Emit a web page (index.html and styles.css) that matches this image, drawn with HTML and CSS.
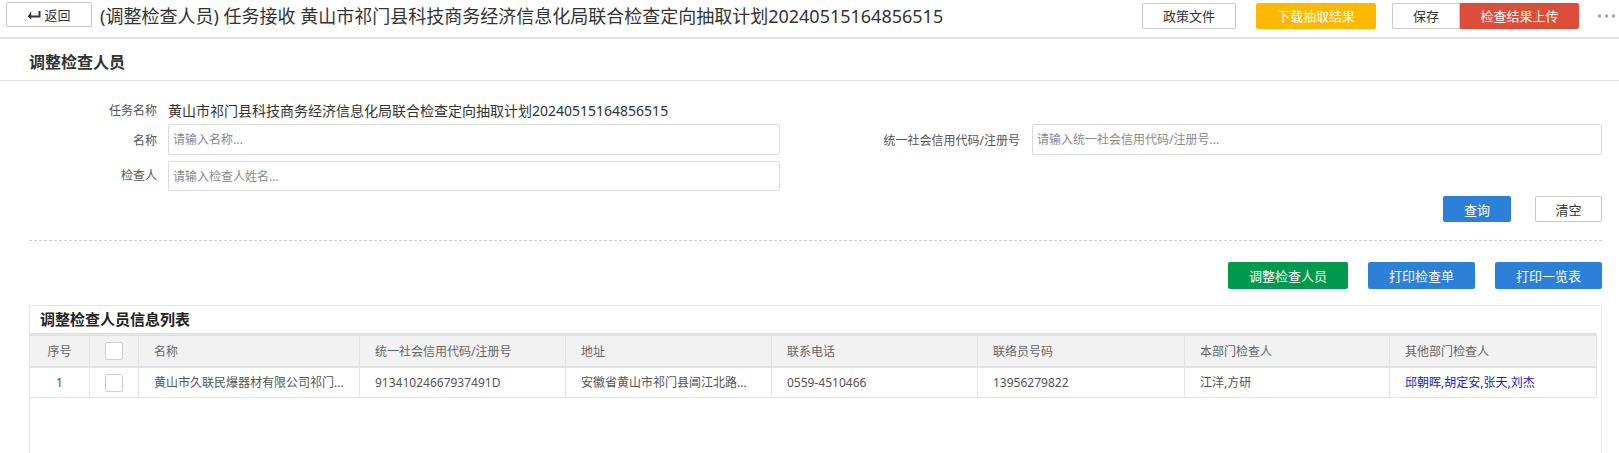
FILE: index.html
```html
<!DOCTYPE html>
<html lang="zh-CN">
<head>
<meta charset="utf-8">
<title>调整检查人员</title>
<link rel="stylesheet" href="styles.css">
</head>
<body>
<div class="topbar">
  <button class="back">
    <svg class="back-icon" width="14" height="10" viewBox="0 0 14 10"><path d="M4.2 1.2 L0.8 6.5 L4.2 9.5 Z" fill="#333"/><path d="M3 6.5 H12.5 V1" fill="none" stroke="#333" stroke-width="2"/></svg>
    <span>返回</span>
  </button>
  <div class="page-title">(调整检查人员) 任务接收 黄山市祁门县科技商务经济信息化局联合检查定向抽取计划20240515164856515</div>
  <div class="top-actions">
    <button class="tbtn tbtn-policy">政策文件</button>
    <button class="tbtn tbtn-yellow">下载抽取结果</button>
    <button class="tbtn tbtn-save">保存</button>
    <button class="tbtn tbtn-red">检查结果上传</button>
    <svg class="dots" width="19" height="6" viewBox="0 0 19 6"><circle cx="2.5" cy="3" r="1.8" fill="#a8a8a8"/><circle cx="9.5" cy="3" r="1.8" fill="#a8a8a8"/><circle cx="16.5" cy="3" r="1.8" fill="#a8a8a8"/></svg>
  </div>
</div>

<div class="section-head">调整检查人员</div>

<div class="form">
  <div class="form-label first">任务名称</div>
  <div class="form-value first">黄山市祁门县科技商务经济信息化局联合检查定向抽取计划20240515164856515</div>
  <div class="form-empty"></div>
  <div class="form-empty"></div>

  <div class="form-label">名称</div>
  <input class="form-input" type="text" placeholder="请输入名称...">
  <div class="form-label">统一社会信用代码/注册号</div>
  <input class="form-input" type="text" placeholder="请输入统一社会信用代码/注册号...">

  <div class="form-label third">检查人</div>
  <input class="form-input third" type="text" placeholder="请输入检查人姓名...">
  <div class="form-empty"></div>
  <div class="form-empty"></div>
</div>

<div class="query-row">
  <button class="qbtn qbtn-blue">查询</button>
  <button class="qbtn qbtn-white">清空</button>
</div>

<div class="dash"></div>

<div class="action-row">
  <button class="abtn abtn-green">调整检查人员</button>
  <button class="abtn abtn-blue">打印检查单</button>
  <button class="abtn abtn-blue">打印一览表</button>
</div>

<div class="panel">
  <div class="panel-title">调整检查人员信息列表</div>
  <div class="grid">
    <div class="cell head center">序号</div>
    <div class="cell head center"><span class="chk"></span></div>
    <div class="cell head">名称</div>
    <div class="cell head">统一社会信用代码/注册号</div>
    <div class="cell head">地址</div>
    <div class="cell head">联系电话</div>
    <div class="cell head">联络员号码</div>
    <div class="cell head">本部门检查人</div>
    <div class="cell head">其他部门检查人</div>

    <div class="cell center">1</div>
    <div class="cell center"><span class="chk"></span></div>
    <div class="cell">黄山市久联民爆器材有限公司祁门...</div>
    <div class="cell">91341024667937491D</div>
    <div class="cell">安徽省黄山市祁门县阊江北路...</div>
    <div class="cell">0559-4510466</div>
    <div class="cell">13956279822</div>
    <div class="cell">江洋,方研</div>
    <div class="cell link">邱朝晖,胡定安,张天,刘杰</div>
  </div>
</div>
</body>
</html>
```

FILE: styles.css
```css
* { box-sizing: border-box; }
html, body {
  margin: 0;
  padding: 0;
  background: #fff;
  font-family: "Noto Sans", "Noto Sans CJK SC", sans-serif;
  color: #333;
  overflow: hidden;
}
button {
  font-family: inherit;
  cursor: pointer;
  padding: 0;
  margin: 0;
}

/* top bar */
.topbar {
  display: flex;
  align-items: flex-start;
  height: 39px;
  padding-left: 6px;
  padding-right: 3px;
  border-bottom: 2px solid #e3e3e3;
}
.back {
  margin-top: 2px;
  width: 86px;
  height: 25px;
  background: #fff;
  border: 1px solid #c9c9c9;
  border-radius: 2px;
  display: flex;
  align-items: center;
  justify-content: center;
  gap: 3px;
  font-size: 13px;
  color: #333;
}
.back-icon { display: block; }
.page-title {
  margin-left: 8px;
  font-size: 18px;
  line-height: 32px;
  color: #333;
  white-space: nowrap;
}
.top-actions {
  margin-left: auto;
  margin-top: 3px;
  display: flex;
  align-items: center;
}
.tbtn {
  height: 26px;
  font-size: 13px;
  line-height: 24px;
  border-radius: 2px;
  border: 1px solid #c9c9c9;
  background: #fff;
  color: #333;
}
.tbtn-policy { width: 94px; margin-right: 20px; }
.tbtn-yellow {
  width: 120px;
  margin-right: 16px;
  background: #ffb800;
  border-color: #ffb800;
  color: #fff;
}
.tbtn-save {
  width: 68px;
  border-radius: 2px 0 0 2px;
}
.tbtn-red {
  width: 119px;
  background: #dd4e3a;
  border-color: #dd4e3a;
  color: #fff;
  border-radius: 0 2px 2px 0;
}
.dots { margin-left: 18px; display: block; }

/* section head */
.section-head {
  height: 42px;
  padding-left: 29px;
  padding-top: 12px;
  font-size: 16px;
  line-height: 22px;
  font-weight: bold;
  color: #333;
  border-bottom: 1px solid #e2e2e2;
}

/* form */
.form {
  display: grid;
  grid-template-columns: 139px 612px 252px 570px;
  grid-template-rows: 20px 31px 33px;
  row-gap: 3px;
  padding: 20px 17px 0 29px;
}
.form-label {
  font-size: 12px;
  color: #555;
  text-align: right;
  align-self: center;
  white-space: nowrap;
}
.form-label:nth-child(4n+1) { padding-right: 11px; }
.form-label:nth-child(4n+3) { padding-right: 12px; }
.form-label.first { line-height: 20px; }
.form-value {
  font-size: 14px;
  line-height: 20px;
  color: #333;
  white-space: nowrap;
}
.form-input {
  height: 31px;
  width: 100%;
  border: 1px solid #dcdcdc;
  border-radius: 2px;
  padding: 0 4px;
  font-family: inherit;
  font-size: 12px;
  color: #333;
  outline: none;
}
.form-input::placeholder { color: #8a8a8a; }
.form-input.third { height: 30px; align-self: end; }
.form-label.third { align-self: end; line-height: 30px; }

.query-row {
  display: flex;
  justify-content: flex-end;
  gap: 24px;
  padding: 5px 17px 0 0;
}
.qbtn {
  height: 26px;
  width: 68px;
  font-size: 13px;
  border-radius: 2px;
}
.qbtn-blue {
  background: #2d80d8;
  border: 1px solid #2d80d8;
  color: #fff;
}
.qbtn-white {
  width: 67px;
  background: #fff;
  border: 1px solid #c9c9c9;
  color: #333;
}

.dash {
  margin: 18px 17px 0 29px;
  border-top: 1px dashed #cfcfcf;
}

.action-row {
  display: flex;
  justify-content: flex-end;
  gap: 20px;
  padding: 21px 17px 0 0;
}
.abtn {
  height: 27px;
  font-size: 13px;
  color: #fff;
  border-radius: 2px;
  border: none;
}
.abtn-green { width: 120px; background: #009a4f; }
.abtn-blue { width: 107px; background: #2d80d8; }

/* panel */
.panel {
  margin: 16px 17px 0 29px;
  border: 1px solid #e6e6e6;
  border-bottom: none;
  height: 160px;
}
.panel-title {
  height: 27px;
  padding-left: 10px;
  font-size: 15px;
  line-height: 27px;
  font-weight: bold;
  color: #222;
}
.grid {
  display: grid;
  grid-template-columns: 60px 49px 221px 206px 206px 206px 207px 205px 207px;
  width: 1567px;
}
.cell {
  height: 30px;
  border-right: 1px solid #e4e4e4;
  border-bottom: 1px solid #e4e4e4;
  padding-left: 15px;
  font-size: 12px;
  line-height: 29px;
  color: #555;
  white-space: nowrap;
  overflow: hidden;
  display: flex;
  align-items: center;
}
.cell.head {
  height: 35px;
  background: #f2f2f2;
  border-top: 3px solid #e2e2e2;
  border-bottom: 2px solid #e2e2e2;
  color: #666;
}
.cell.center {
  justify-content: center;
  padding-left: 0;
}
.cell.link { color: #1a1acd; }
.chk {
  display: block;
  width: 18px;
  height: 18px;
  border: 1px solid #cfcfcf;
  border-radius: 2px;
  background: #fff;
}
```
